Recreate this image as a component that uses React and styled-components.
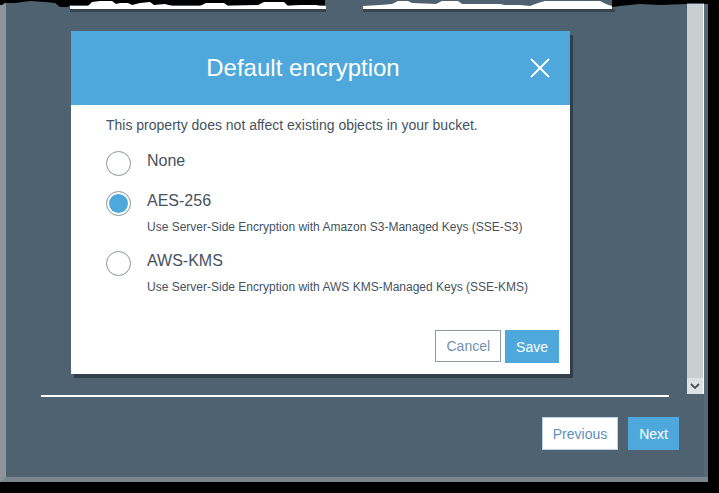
import React, { useState } from 'react';
import styled, { createGlobalStyle } from 'styled-components';

const GlobalStyle = createGlobalStyle`
  html, body {
    margin: 0;
    padding: 0;
    background: #000;
    font-family: "Liberation Sans", Arial, sans-serif;
  }
`;

const options = [
  { id: 'none', label: 'None' },
  { id: 'aes', label: 'AES-256', sub: 'Use Server-Side Encryption with Amazon S3-Managed Keys (SSE-S3)' },
  { id: 'kms', label: 'AWS-KMS', sub: 'Use Server-Side Encryption with AWS KMS-Managed Keys (SSE-KMS)' },
];

function TornEdge() {
  return (
    <Torn viewBox="0 0 719 14" width="719" height="14">
      <path
        fill="#000"
        d="M0 0 H719 V4 H704 V3 H687 V4 L660 5 L640 4 L620 6 L612 7 L612 0 L325 0 L325 5 L70 5 L68 7 L60 7 L55 3 L45 2 L30 1 L15 3 L5 3 L2 5 L0 5 Z"
      />
      <path
        fill="#fff"
        d="M70 9 L70 6 L88 6 L92 2 L100 1 L112 1 L116 4 L120 3 L128 3 L132 5 L140 3 L150 2 L154 5 L165 4 L172 6 L200 6 L206 3 L224 3 L228 6 L258 5 L264 2 L284 2 L288 6 L300 5 L316 5 L320 6 L326 6 L326 9 Z
           M363 9 L363 6 L380 5 L392 4 L398 1 L408 1 L412 3 L436 4 L442 1 L458 1 L462 4 L500 4 L505 5 L520 5 L530 6 L538 3 L545 1 L600 1 L606 4 L612 6 L612 9 Z"
      />
      <rect x="70" y="9" width="256" height="3" fill="#24313b" opacity="0.6" />
      <rect x="363" y="9" width="252" height="3" fill="#24313b" opacity="0.6" />
    </Torn>
  );
}

function Radio({ checked }) {
  return <Circle $checked={checked} />;
}

export default function App() {
  const [choice, setChoice] = useState('aes');

  return (
    <Page>
      <GlobalStyle />
      <Frame>
        <Main>
          <Modal>
            <Header>
              <Title>Default encryption</Title>
              <Close aria-label="Close">
                <svg width="20" height="20" viewBox="0 0 20 20">
                  <path d="M1 1 L19 19 M19 1 L1 19" stroke="#fff" strokeWidth="1.8" />
                </svg>
              </Close>
            </Header>
            <Body>
              <Intro>This property does not affect existing objects in your bucket.</Intro>
              <OptionList>
                {options.map((o) => (
                  <Option key={o.id} onClick={() => setChoice(o.id)}>
                    <Radio checked={choice === o.id} />
                    <OptionLabel>{o.label}</OptionLabel>
                    {o.sub && <OptionSub>{o.sub}</OptionSub>}
                  </Option>
                ))}
              </OptionList>
              <ModalActions>
                <Button>Cancel</Button>
                <Button $primary>Save</Button>
              </ModalActions>
            </Body>
          </Modal>
          <Divider />
          <Footer>
            <Button $ghost>Previous</Button>
            <Button $primary>Next</Button>
          </Footer>
        </Main>
        <Scrollbar>
          <ScrollArrow>
            <svg width="10" height="7" viewBox="0 0 10 7">
              <path d="M1 1 L5 5 L9 1" stroke="#45525e" strokeWidth="1.8" fill="none" />
            </svg>
          </ScrollArrow>
        </Scrollbar>
        <Strip />
      </Frame>
      <TornEdge />
    </Page>
  );
}

const Page = styled.div`
  position: relative;
  width: 719px;
  height: 493px;
  background: #000;
  overflow: hidden;
`;

const Torn = styled.svg`
  position: absolute;
  top: 0;
  left: 0;
  display: block;
`;

const Frame = styled.div`
  display: flex;
  width: 708px;
  height: 482px;
  box-sizing: border-box;
  border-left: 6px solid #8d959b;
  border-bottom: 5px solid #7b858d;
  background: #4f6272;
`;

const Main = styled.div`
  flex: 1;
  display: flex;
  flex-direction: column;
  padding-top: 31px;
`;

const Modal = styled.div`
  margin-left: 65px;
  width: 499px;
  height: 343px;
  display: flex;
  flex-direction: column;
  background: #fff;
  box-shadow: 3px 4px 0 rgba(24, 34, 44, 0.55);
`;

const Header = styled.div`
  height: 74px;
  display: flex;
  align-items: center;
  background: #4ea8db;
`;

const Title = styled.h2`
  flex: 1;
  margin: 0;
  padding-left: 5px;
  text-align: center;
  color: #fff;
  font-size: 24px;
  font-weight: normal;
`;

const Close = styled.button`
  width: 20px;
  height: 20px;
  margin-right: 20px;
  padding: 0;
  border: 0;
  background: none;
  display: flex;
  cursor: pointer;
`;

const Body = styled.div`
  flex: 1;
  display: flex;
  flex-direction: column;
  padding: 10px 11px 11px 35px;
  color: #46525e;
`;

const Intro = styled.p`
  margin: 0;
  font-size: 14px;
  line-height: 20px;
`;

const OptionList = styled.div`
  margin-top: 16px;
  display: flex;
  flex-direction: column;
  gap: 15px;
`;

const Option = styled.label`
  display: grid;
  grid-template-columns: 25px 1fr;
  column-gap: 16px;
  align-items: start;
  cursor: pointer;
`;

const Circle = styled.span`
  grid-row: 1 / span 2;
  width: 25px;
  height: 25px;
  box-sizing: border-box;
  border-radius: 50%;
  border: 1px solid #89939b;
  padding: 2px;
  background: ${(p) => (p.$checked ? '#4ea8db' : '#fff')};
  background-clip: content-box;
`;

const OptionLabel = styled.span`
  font-size: 16px;
  line-height: 20px;
`;

const OptionSub = styled.span`
  grid-column: 2;
  margin-top: 7px;
  font-size: 12px;
  line-height: 18px;
`;

const ModalActions = styled.div`
  margin-top: auto;
  display: flex;
  justify-content: flex-end;
  gap: 4px;
`;

const Button = styled.button`
  height: ${(p) => (p.$ghost || p.$primary ? '33px' : '32px')};
  padding: 0 10px;
  font-family: "Liberation Sans", Arial, sans-serif;
  font-size: 14px;
  border: 1px solid ${(p) => (p.$primary ? '#4ea8db' : p.$ghost ? '#b9d3ea' : '#8d9ba6')};
  background: ${(p) => (p.$primary ? '#4ea8db' : '#fff')};
  color: ${(p) => (p.$primary ? '#fff' : p.$ghost ? '#5e8fbd' : '#7491ad')};
  cursor: pointer;
`;

const Divider = styled.hr`
  margin: 21px 0 0 35px;
  width: 628px;
  height: 2px;
  border: 0;
  background: #fff;
`;

const Footer = styled.div`
  margin-top: 20px;
  padding-right: 8px;
  display: flex;
  justify-content: flex-end;
  gap: 10px;
`;

const Scrollbar = styled.div`
  margin-top: 4px;
  width: 16px;
  height: 390px;
  display: flex;
  flex-direction: column;
  justify-content: flex-end;
  background: #c9ced1;
  border-right: 1px solid #fff;
`;

const ScrollArrow = styled.div`
  height: 16px;
  display: flex;
  align-items: center;
  justify-content: center;
  background: #dfe2e4;
`;

const Strip = styled.div`
  width: 4px;
  background: #56687a;
`;
